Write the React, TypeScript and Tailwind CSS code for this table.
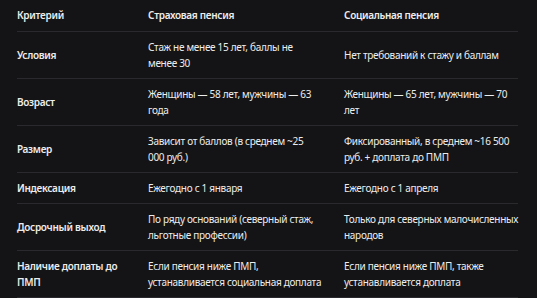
import React from "react";

const rows: [string[], string[], string[]][] = [
  [["Условия"], ["Стаж не менее 15 лет, баллы не", "менее 30"], ["Нет требований к стажу и баллам"]],
  [["Возраст"], ["Женщины — 58 лет, мужчины — 63", "года"], ["Женщины — 65 лет, мужчины — 70", "лет"]],
  [["Размер"], ["Зависит от баллов (в среднем ~25", "000 руб.)"], ["Фиксированный, в среднем ~16 500", "руб. + доплата до ПМП"]],
  [["Индексация"], ["Ежегодно с 1 января"], ["Ежегодно с 1 апреля"]],
  [["Досрочный выход"], ["По ряду оснований (северный стаж,", "льготные профессии)"], ["Только для северных малочисленных", "народов"]],
  [["Наличие доплаты до", "ПМП"], ["Если пенсия ниже ПМП,", "устанавливается социальная доплата"], ["Если пенсия ниже ПМП, также", "устанавливается доплата"]],
];

function Lines({ lines }: { lines: string[] }) {
  return (
    <>
      {lines.map((l, i) => (
        <div key={i} className="whitespace-nowrap">
          {l}
        </div>
      ))}
    </>
  );
}

export default function App() {
  return (
    <div
      className="w-[537px] h-[298px] overflow-hidden bg-[#141416] text-[#ededed] text-[10px] leading-[16px] tracking-[-0.3px]"
      style={{ fontFamily: '"Noto Sans", sans-serif' }}
    >
      <table className="ml-[17px] w-[501px] border-collapse table-fixed">
        <colgroup>
          <col className="w-[131px]" />
          <col className="w-[196px]" />
          <col className="w-[174px]" />
        </colgroup>
        <thead>
          <tr className="border-b border-[#2a2a2e]">
            <th className="text-left font-semibold pt-[7px] pb-[8px] pr-4 align-middle">Критерий</th>
            <th className="text-left font-semibold pt-[7px] pb-[8px] pr-4 align-middle">Страховая пенсия</th>
            <th className="text-left font-semibold pt-[7px] pb-[8px] align-middle">Социальная пенсия</th>
          </tr>
        </thead>
        <tbody>
          {rows.map((r, i) => (
            <tr key={i} className="border-b border-[#2a2a2e]">
              <td className="font-semibold py-[7px] pr-4 align-middle">
                <Lines lines={r[0]} />
              </td>
              <td className="py-[7px] pr-4 align-middle">
                <Lines lines={r[1]} />
              </td>
              <td className="py-[7px] align-middle">
                <Lines lines={r[2]} />
              </td>
            </tr>
          ))}
        </tbody>
      </table>
    </div>
  );
}
